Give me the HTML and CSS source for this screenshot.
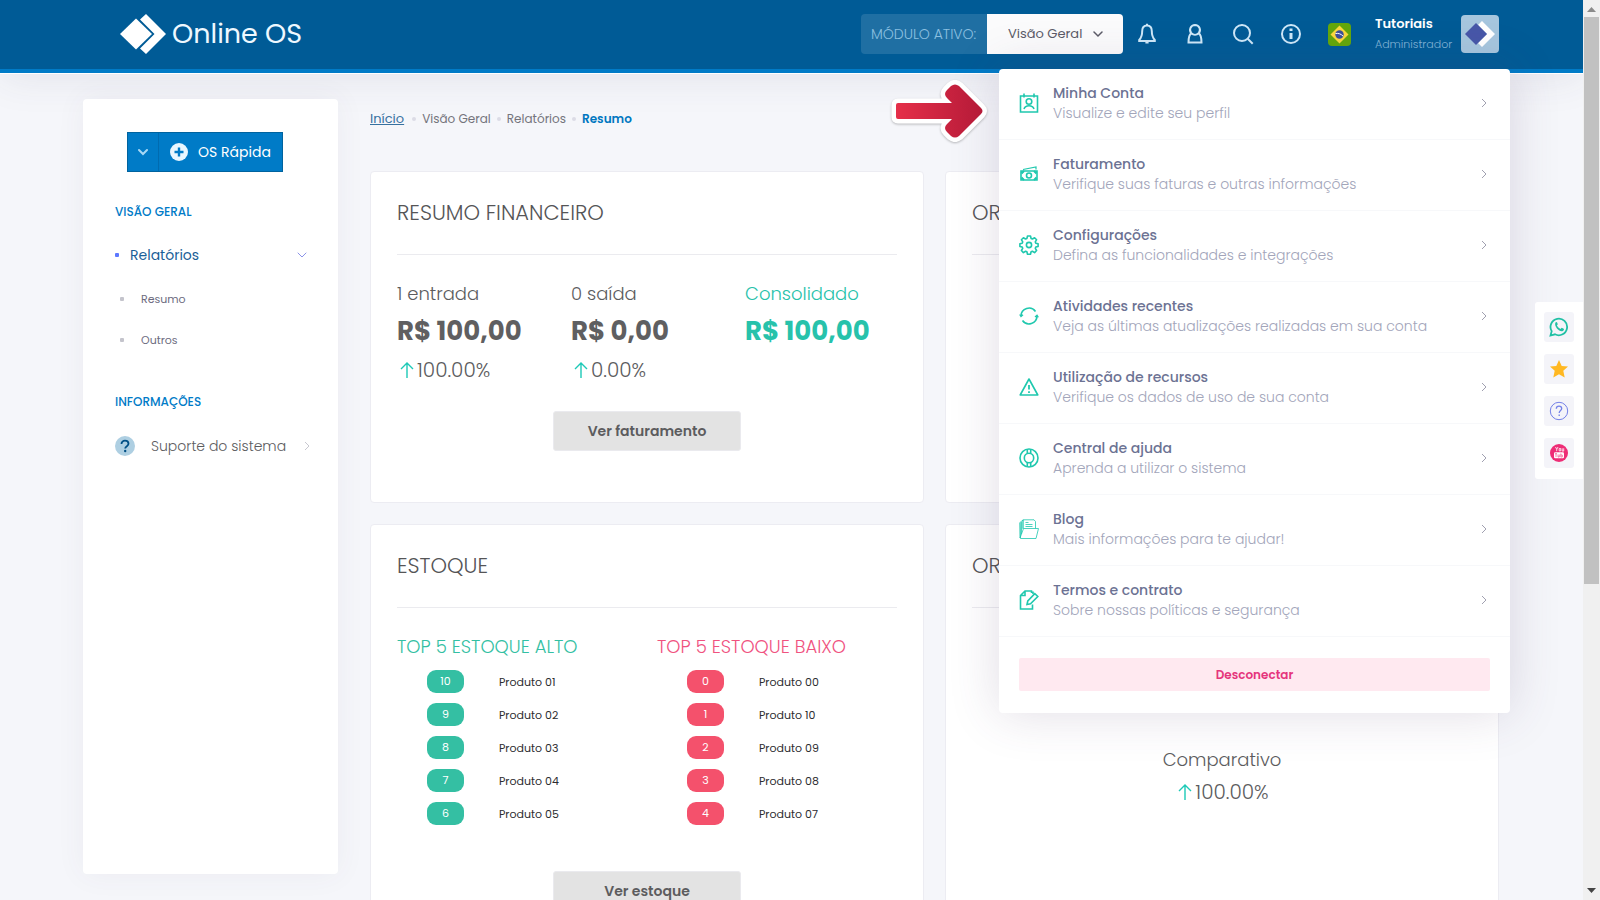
FILE: index.html
```html
<!DOCTYPE html>
<html lang="pt-BR">
<head>
<meta charset="utf-8">
<meta name="viewport" content="width=device-width, initial-scale=1">
<title>Online OS</title>
<link rel="stylesheet" href="styles.css">
</head>
<body>
<svg class="defs" width="0" height="0" aria-hidden="true">
  <symbol id="chev-right" viewBox="0 0 10 10"><path d="M3 1l4 4-4 4" fill="none" stroke="currentColor"/></symbol>
  <symbol id="chev-down" viewBox="0 0 10 10"><path d="M1 3l4 4 4-4" fill="none" stroke="currentColor" stroke-linecap="round"/></symbol>
  <symbol id="arrow-up" viewBox="0 0 14 18"><path d="M7 17V2M1 8l6-6 6 6" fill="none" stroke="currentColor" stroke-width="1.4"/></symbol>
</svg>
<div class="page">
  <header class="topbar">
    <a class="brand" href="#">
      <svg width="46" height="40" viewBox="0 0 46 40" aria-hidden="true"><path d="M0 20L16 4.500l16 15.500-16 15.500z" fill="#fff"/><path d="M20 5.500l6-5.500 20 20-20 20-6-5.500 14.500-14.500z" fill="#fff"/></svg>
      <span>Online OS</span>
    </a>
    <div class="tools">
      <div class="module">
        <label for="module">MÓDULO ATIVO:</label>
        <div class="module-box">
          <select id="module"><option>Visão Geral</option></select>
          <svg width="10" height="10" aria-hidden="true"><use href="#chev-down"/></svg>
        </div>
      </div>
      <nav class="quick">
        <button aria-label="Notificações"><svg width="20" height="22" viewBox="0 0 20 22"><path d="M10 2.500c-3.300 0-4.800 2.500-4.800 5.600 0 4.500-.8 6.600-3 8.900v1h15.600v-1c-2.200-2.300-3-4.400-3-8.900 0-3.100-1.500-5.600-4.800-5.600zM10 .8v1.700M8.400 19.500h3.200"/></svg></button>
        <button aria-label="Usuário"><svg width="20" height="22" viewBox="0 0 20 22"><path d="M10 2a5 5 0 0 1 3.700 8.300C15.700 11.500 16.500 14 16.500 19.500h-13c0-5.500.8-8 2.800-9.200A5 5 0 0 1 10 2z"/><path d="M6.300 10.300c2.100 1.900 5.300 1.900 7.400 0"/></svg></button>
        <button aria-label="Buscar"><svg width="22" height="22" viewBox="0 0 22 22"><circle cx="10" cy="10" r="8"/><path d="M15.700 15.700l5 5"/></svg></button>
        <button aria-label="Informações"><svg width="22" height="22" viewBox="0 0 22 22"><circle cx="11" cy="11" r="9"/><path d="M11 10v6" stroke-width="3"/><path d="M11 5.500v2.500" stroke-width="3"/></svg></button>
        <button aria-label="Idioma"><svg class="flag" width="23" height="23" viewBox="0 0 23 23"><rect width="23" height="23" rx="4" fill="#64a70b"/><path d="M11.500 2.500l9 9-9 9-9-9z" fill="#fbd83c"/><circle cx="11.500" cy="11.500" r="4.200" fill="#3e4f99"/><path d="M7.500 10.500c3-.5 5.500.5 7.500 2.500" fill="none" stroke="#fff" stroke-width="1"/></svg></button>
      </nav>
      <button class="profile">
        <span class="who"><strong>Tutoriais</strong><small>Administrador</small></span>
        <svg width="38" height="38" viewBox="0 0 38 38" aria-hidden="true"><rect width="38" height="38" rx="4" fill="#a6c6de"/><path d="M17 10l4-4 13 13-13 13-4-4 9-9z" fill="#fff"/><path d="M4 19l11-11 11 11-11 11z" fill="#4757a8"/></svg>
      </button>
    </div>
  </header>

  <div class="shell">
    <aside class="sidebar">
      <div class="split">
        <button class="split-toggle" aria-label="Mais opções"><svg width="10" height="10"><use href="#chev-down"/></svg></button>
        <button class="split-main"><svg width="18" height="18" viewBox="0 0 18 18" aria-hidden="true"><circle cx="9" cy="9" r="9" fill="#e9f7ff"/><path d="M9 4.500v9M4.500 9h9" stroke="#007bc7" stroke-width="2.400"/></svg>OS Rápida</button>
      </div>
      <h2 class="menu-title">VISÃO GERAL</h2>
      <ul class="menu">
        <li><a class="menu-link active" href="#"><i class="dot"></i><span>Relatórios</span><svg width="10" height="10" aria-hidden="true"><use href="#chev-down"/></svg></a>
          <ul class="submenu">
            <li><a href="#"><i class="dot"></i>Resumo</a></li>
            <li><a href="#"><i class="dot"></i>Outros</a></li>
          </ul>
        </li>
      </ul>
      <h2 class="menu-title">INFORMAÇÕES</h2>
      <a class="menu-link support" href="#">
        <svg class="help" width="20" height="20" viewBox="0 0 20 20" aria-hidden="true"><circle cx="10" cy="10" r="10" fill="#aecfe2"/><path d="M6.500 8c0-2 1.500-3.300 3.500-3.300s3.500 1.200 3.500 3.100c0 2.400-3.300 2.300-3.300 4.700" fill="none" stroke="#004f85" stroke-width="1.800"/><circle cx="10.200" cy="15" r="1.200" fill="#004f85"/></svg>
        <span>Suporte do sistema</span>
        <svg width="10" height="10" aria-hidden="true"><use href="#chev-right"/></svg>
      </a>
    </aside>

    <main class="content">
      <nav class="crumbs" aria-label="Trilha">
        <a href="#">Início</a><i></i><span>Visão Geral</span><i></i><span>Relatórios</span><i></i><b>Resumo</b>
      </nav>
      <div class="cards">
        <section class="card">
          <h3>RESUMO FINANCEIRO</h3>
          <div class="stats">
            <div class="stat"><span>1 entrada</span><strong>R$ 100,00</strong><em><svg width="14" height="18" aria-hidden="true"><use href="#arrow-up"/></svg>100.00%</em></div>
            <div class="stat"><span>0 saída</span><strong>R$ 0,00</strong><em><svg width="14" height="18" aria-hidden="true"><use href="#arrow-up"/></svg>0.00%</em></div>
            <div class="stat total"><span>Consolidado</span><strong>R$ 100,00</strong></div>
          </div>
          <button class="more">Ver faturamento</button>
        </section>
        <section class="card"><h3>ORDENS DE SERVIÇO</h3></section>
        <section class="card tall">
          <h3>ESTOQUE</h3>
          <div class="tops">
            <div class="top high">
              <h4>TOP 5 ESTOQUE ALTO</h4>
              <ul>
                <li><b>10</b>Produto 01</li><li><b>9</b>Produto 02</li><li><b>8</b>Produto 03</li><li><b>7</b>Produto 04</li><li><b>6</b>Produto 05</li>
              </ul>
            </div>
            <div class="top low">
              <h4>TOP 5 ESTOQUE BAIXO</h4>
              <ul>
                <li><b>0</b>Produto 00</li><li><b>1</b>Produto 10</li><li><b>2</b>Produto 09</li><li><b>3</b>Produto 08</li><li><b>4</b>Produto 07</li>
              </ul>
            </div>
          </div>
          <button class="more">Ver estoque</button>
        </section>
        <section class="card tall">
          <h3>ORÇAMENTOS</h3>
          <div class="compare"><span>Comparativo</span><em><svg width="14" height="18" aria-hidden="true"><use href="#arrow-up"/></svg>100.00%</em></div>
        </section>
      </div>
    </main>
  </div>

  <div class="user-menu">
    <a href="#"><svg width="20" height="20" viewBox="0 0 20 20"><path d="M1.500 3h17v16h-17zM5 .5v4M15 .5v4"/><circle cx="10" cy="8.500" r="2.800"/><path d="M5 16c.8-2.300 2.500-3.200 5-3.200s4.200.9 5 3.200"/></svg><span><strong>Minha Conta</strong><small>Visualize e edite seu perfil</small></span><svg class="go" width="10" height="10"><use href="#chev-right"/></svg></a>
    <a href="#"><svg width="20" height="20" viewBox="0 0 20 20"><path d="M2 7h16v9H2z"/><circle cx="10" cy="11.500" r="2.500"/><path d="M2.500 9.500L5 7M17.500 9.500L15 7M2.500 13.500L5 16M17.500 13.500L15 16" stroke-width="2"/><path d="M4 5.500l13-2.500v2.500" stroke-width="1.200"/></svg><span><strong>Faturamento</strong><small>Verifique suas faturas e outras informações</small></span><svg class="go" width="10" height="10"><use href="#chev-right"/></svg></a>
    <a href="#"><svg width="20" height="20" viewBox="0 0 20 20"><path d="M8.500 1h3l.6 2.500 1.300.5 2.200-1.300 2 2-1.300 2.200.5 1.400 2.300.5v2.600l-2.300.6-.5 1.300 1.300 2.200-2 2.100-2.200-1.300-1.300.5-.6 2.400h-3l-.6-2.400-1.300-.5-2.200 1.300-2-2.100 1.300-2.200-.5-1.300L.9 11.400V8.800l2.300-.5.5-1.400-1.300-2.200 2-2L6.600 4l1.300-.5z" stroke-linejoin="round"/><circle cx="10" cy="10" r="2.600"/></svg><span><strong>Configurações</strong><small>Defina as funcionalidades e integrações</small></span><svg class="go" width="10" height="10"><use href="#chev-right"/></svg></a>
    <a href="#"><svg width="20" height="20" viewBox="0 0 20 20"><path d="M2 10a8 8 0 0 1 14.500-4.500M18 10A8 8 0 0 1 3.500 14.500"/><path d="M.7 8.500L2 10.500l2-1.700M19.300 11.300L18 9.300l-2 1.700" stroke-width="1.300"/></svg><span><strong>Atividades recentes</strong><small>Veja as últimas atualizações realizadas em sua conta</small></span><svg class="go" width="10" height="10"><use href="#chev-right"/></svg></a>
    <a href="#"><svg width="20" height="20" viewBox="0 0 20 20"><path d="M10 2L1.200 18h17.600z" stroke-linejoin="round"/><path d="M10 8v4.500M10 14.200v1.800" stroke-width="1.800"/></svg><span><strong>Utilização de recursos</strong><small>Verifique os dados de uso de sua conta</small></span><svg class="go" width="10" height="10"><use href="#chev-right"/></svg></a>
    <a href="#"><svg width="20" height="20" viewBox="0 0 20 20"><circle cx="10" cy="10" r="9"/><circle cx="10" cy="10" r="4.700"/><path d="M8.300 1v4.700M11.700 1v4.700M8.300 14.300V19M11.700 14.300V19"/></svg><span><strong>Central de ajuda</strong><small>Aprenda a utilizar o sistema</small></span><svg class="go" width="10" height="10"><use href="#chev-right"/></svg></a>
    <a href="#"><svg width="20" height="20" viewBox="0 0 20 20" class="thin"><path d="M1 19V3.500L4 1v9M1 19l3.500-9.500H19.500L17 19.500H1.500L1 3.500M4 9.500V.8h11l1.500 1.700v7M2.500 3v12"/><path d="M6.500 3.500h3M6.500 5.500h7M6.500 7.500h7"/></svg><span><strong>Blog</strong><small>Mais informações para te ajudar!</small></span><svg class="go" width="10" height="10"><use href="#chev-right"/></svg></a>
    <a href="#"><svg width="20" height="20" viewBox="0 0 20 20"><path d="M12.500 3V1H6L1.500 5.500V19H13.500v-4.500M6 1v4.500H1.500M14 1.500V4"/><path d="M8 14.500l.8-3.500 7-7.300 3 2.800-7.300 7.200z"/></svg><span><strong>Termos e contrato</strong><small>Sobre nossas políticas e segurança</small></span><svg class="go" width="10" height="10"><use href="#chev-right"/></svg></a>
    <div class="menu-foot"><button>Desconectar</button></div>
  </div>

  <svg class="pointer" width="106" height="76" viewBox="0 0 106 76" aria-hidden="true">
    <defs><linearGradient id="red" x1="0" x2="1"><stop offset="0" stop-color="#e52f49"/><stop offset="1" stop-color="#b51a38"/></linearGradient></defs>
    <path class="halo" d="M11 31h54l-5-5q-4-4 0-8l4-4q4-3 8 0l22 22q3 3 0 6L72 64q-4 3-8 0l-4-4q-4-4 0-8l5-5H11q-2 0-2-2V33q0-2 2-2z"/>
    <path d="M11 31h54l-5-5q-4-4 0-8l4-4q4-3 8 0l22 22q3 3 0 6L72 64q-4 3-8 0l-4-4q-4-4 0-8l5-5H11q-2 0-2-2V33q0-2 2-2z" fill="url(#red)"/>
  </svg>

  <div class="dock">
    <button aria-label="WhatsApp"><svg width="20" height="20" viewBox="0 0 20 20"><path d="M1.500 18.500l1.200-4.300A8.300 8.300 0 1 1 6 17.300z" fill="none" stroke="#1fc0a4" stroke-width="1.800"/><path d="M6.300 5.800c.7-1 1.500-.9 1.800-.2l.7 1.700-.9 1.300c.8 1.600 2 2.600 3.600 3.300l1.200-1.200 2 1c.6.400.3 1.800-1 2.400-3 1.200-8.600-4.200-7.400-8.300z" fill="#1fc0a4"/></svg></button>
    <button aria-label="Favoritos"><svg width="20" height="20" viewBox="0 0 20 20"><path d="M10 1l2.700 5.900 6.300.7-4.700 4.200 1.400 6.700-5.700-3.300-5.700 3.300 1.400-6.700L1 7.600l6.300-.7z" fill="#ffb822"/></svg></button>
    <button aria-label="Ajuda"><svg width="20" height="20" viewBox="0 0 20 20"><circle cx="10" cy="10" r="8.700" fill="none" stroke="#7380e8" stroke-width="1"/><path d="M7.300 7.800c0-1.700 1.200-2.700 2.700-2.700s2.700 1 2.700 2.500c0 2-2.500 2-2.500 4.400M10.200 13.500v1.500" fill="none" stroke="#7380e8" stroke-width="1.300"/></svg></button>
    <button aria-label="YouTube"><svg width="20" height="20" viewBox="0 0 20 20"><circle cx="10" cy="10" r="9" fill="#ee2d76"/><path d="M6.500 4l1.200 2.300V8.200M9 4L7.700 6.300M10.200 5.500h1.500v2.400h-1.500zM13.200 5.300v2.800h1.500V5.300" fill="none" stroke="#fff" stroke-width=".8"/><rect x="5" y="9.300" width="10" height="6" rx="1.200" fill="#fff"/><path d="M6 10.700h2M7 10.700v3.300M9 11.500v2.500h1.300v-2.500M11.800 10.500V14h1.500v-2h-1.500" fill="none" stroke="#ee2d76" stroke-width=".6"/></svg></button>
  </div>

  <div class="scroll" aria-hidden="true">
    <svg width="9" height="5" viewBox="0 0 9 5"><path d="M0 5l4.500-5L9 5z" fill="#8b8b8b"/></svg>
    <i></i>
    <svg width="9" height="5" viewBox="0 0 9 5"><path d="M0 0l4.500 5L9 0z" fill="#444"/></svg>
  </div>
</div>
</body>
</html>
```
FILE: styles.css
```css
*, *::before, *::after { box-sizing: border-box; }
body { margin: 0; background: #f5f6fa; color: #5c5c5e; font: 300 13px/20px Poppins, Inter, sans-serif; }
button, select { font: inherit; color: inherit; border: 0; background: none; padding: 0; cursor: pointer; }
a { color: inherit; text-decoration: none; }
ul { list-style: none; margin: 0; padding: 0; }
h2, h3, h4 { margin: 0; font-weight: 300; }
em, i { font-style: normal; }
svg { display: block; flex: none; }
.defs { position: absolute; }

.page { position: relative; display: flex; flex-direction: column; height: 100vh; overflow: hidden; padding-right: 17px; }

.topbar { display: flex; flex: none; justify-content: space-between; align-items: center; height: 73px; padding: 0 84px 1px 120px; background: #005b96; border-bottom: 4px solid #007bc7; box-shadow: 0 1px 0 #fff, 0 4px 40px rgba(60, 60, 100, .1); }
.brand { display: flex; align-items: center; gap: 6px; color: #eef8ff; font-size: 27px; line-height: 40px; font-weight: 400; }
.tools { display: flex; align-items: center; }
.module { display: flex; height: 40px; }
.module label { width: 126px; padding-left: 10px; border-radius: 4px 0 0 4px; background: #1f6fa3; color: #8cc0e0; font-size: 14px; line-height: 40px; white-space: nowrap; }
.module-box { position: relative; width: 136px; background: #fbfbfc; border-radius: 0 4px 4px 0; color: #5c5c68; }
.module-box select { appearance: none; width: 100%; height: 100%; padding: 0 21px; font-size: 13px; font-weight: 400; }
.module-box svg { position: absolute; right: 20px; top: 15px; stroke-width: 1.5; }
.quick { display: flex; }
.quick button { display: grid; place-items: center; width: 48px; height: 40px; }
.quick button svg { fill: none; stroke: #cfe8f8; stroke-width: 2; }
.quick .flag { stroke: none; }
.profile { display: flex; align-items: center; justify-content: space-between; width: 124px; margin-left: 12px; text-align: left; }
.who strong, .who small { display: block; line-height: 20px; }
.who strong { color: #fff; font-size: 13px; font-weight: 600; }
.who small { color: #82b5d6; font-size: 11px; }

.shell { display: flex; flex: 1; gap: 32px; min-height: 0; padding: 0 84px 0 83px; }
.sidebar { flex: none; width: 255px; margin: 26px 0; padding: 33px 31px 33px 32px; background: #fff; border-radius: 4px; box-shadow: 0 0 30px rgba(82, 63, 105, .06); }
.split { display: flex; width: 156px; height: 40px; margin: 0 auto 30px 12px; border: 1px solid #00639f; background: #007bc7; color: #fff; }
.split-toggle { display: grid; place-items: center; width: 31px; color: #a8d8f5; border-right: 1px solid #006bb0; stroke-width: 2; }
.split-main { display: flex; flex: 1; align-items: center; justify-content: center; gap: 10px; font-size: 14px; font-weight: 400; white-space: nowrap; }
.menu-title { color: #007bc7; font-size: 12px; line-height: 20px; font-weight: 500; }
.menu { margin: 13px 0 32px; }
.menu-link { display: flex; align-items: center; height: 40px; font-size: 14px; white-space: nowrap; }
.menu-link span { flex: 1; }
.dot { width: 4px; height: 4px; border-radius: 1px; background: #5d78ff; }
.active { color: #1b5f98; gap: 11px; font-weight: 400; }
.active svg { color: #8b93e8; }
.submenu { padding: 3px 0 0 5px; }
.submenu a { display: flex; align-items: center; gap: 17px; height: 41px; color: #6c6b80; font-size: 11px; font-weight: 400; }
.submenu .dot { background: #c4c4cc; }
.support { gap: 16px; margin-top: 14px; font-weight: 300; }
.support svg:last-child { color: #c8c8d0; }

.content { flex: 1; min-width: 0; }
.crumbs { display: flex; align-items: center; height: 40px; margin: 26px 0 32px; color: #74747c; font-size: 12px; font-weight: 400; }
.crumbs a { color: #37719f; font-size: 13px; text-decoration: underline; }
.crumbs i { width: 4px; height: 4px; margin: 0 6px; border-radius: 50%; background: #dcdce6; }
.crumbs a + i { margin-left: 8px; }
.crumbs b { color: #0077c0; font-weight: 600; }
.cards { display: grid; grid-template-columns: 1fr 1fr; gap: 21px; }
.card { min-height: 332px; padding: 0 26px 48px; background: #fff; border: 1px solid #ececf2; border-radius: 4px; }
.tall { min-height: 440px; }
.card h3 { height: 83px; margin-bottom: 27px; border-bottom: 1px solid #ebebef; color: #555557; font-size: 21px; line-height: 82px; white-space: nowrap; }
.stats { display: grid; grid-template-columns: 174px 174px 1fr; }
.stat { white-space: nowrap; }
.stat span, .compare span { display: block; font-size: 18px; line-height: 24px; }
.stat strong { display: block; margin: 7px 0 3px; font-size: 26px; line-height: 36px; font-weight: 700; color: #5f5f61; }
.stat em, .compare em { display: flex; align-items: center; gap: 3px; padding-left: 3px; font-size: 20px; line-height: 36px; }
.stat em svg, .compare svg { color: #1dc9b7; }
.total span, .total strong { color: #27c2ab; }
.more { display: block; width: 188px; height: 40px; margin: 23px auto 0; border: 1px solid #eaeaee; border-radius: 3px; background: #e3e3e3; color: #5c5c5e; font-size: 14px; line-height: 36px; font-weight: 600; }
.tops { display: grid; grid-template-columns: 260px 1fr; white-space: nowrap; }
.top h4 { font-size: 18px; line-height: 24px; }
.top ul { display: grid; gap: 10px; margin-top: 11px; padding-left: 30px; }
.top li { display: flex; align-items: center; gap: 35px; height: 23px; color: #2c2c30; font-size: 11px; font-weight: 400; }
.top b { width: 37px; height: 23px; border-radius: 9px; color: #fff; font-weight: 400; line-height: 23px; text-align: center; }
.high h4 { color: #34bfa3; }
.high b { background: #34bfa3; }
.low h4 { color: #f0527f; }
.low b { background: #f4516c; }
.tall .more { margin-top: 46px; }
.compare { display: flex; flex-direction: column; align-items: center; gap: 2px; padding-top: 113px; }

.user-menu { position: absolute; top: 69px; right: 90px; width: 511px; background: #fff; border-radius: 4px; box-shadow: 0 0 50px rgba(82, 63, 105, .18); }
.user-menu a { display: flex; align-items: center; height: 71px; padding: 0 21px 2px 20px; border-bottom: 1px solid #f7f8fa; }
.user-menu a span { flex: 1; padding-left: 14px; }
.user-menu a svg { fill: none; stroke: #1fc8ae; stroke-width: 1.6; }
.user-menu a .thin { stroke-width: .8; }
.user-menu a .go { color: #a0a0b0; stroke: #a0a0b0; stroke-width: 1; }
.user-menu strong, .user-menu small { display: block; line-height: 20px; }
.user-menu strong { color: #6c7293; font-size: 14px; font-weight: 500; }
.user-menu small { color: #a2a5ba; font-size: 14px; font-weight: 300; }
.menu-foot { padding: 21px 20px 22px; }
.menu-foot button { display: block; width: 100%; height: 33px; border-radius: 2px; background: #ffe9f0; color: #e5347c; font-size: 12px; font-weight: 600; }

.pointer { position: absolute; top: 72px; right: 607px; filter: drop-shadow(0 1px 1px rgba(0, 0, 0, .25)); }
.halo { fill: #fff; stroke: #fff; stroke-width: 9; stroke-linejoin: round; }

.dock { position: absolute; top: 302px; right: 17px; display: grid; gap: 12px; padding: 10px 9px 11px; background: #fff; border-radius: 3px 0 0 3px; }
.dock button { display: grid; place-items: center; width: 30px; height: 30px; border-radius: 3px; background: #f4f4f9; }

.scroll { position: absolute; top: 0; right: 0; bottom: 0; display: flex; flex-direction: column; align-items: center; width: 17px; padding: 7px 0; background: #f0f0f0; }
.scroll i { width: 15px; height: 64%; margin: 5px 0 auto; background: #c1c1c1; }
```
